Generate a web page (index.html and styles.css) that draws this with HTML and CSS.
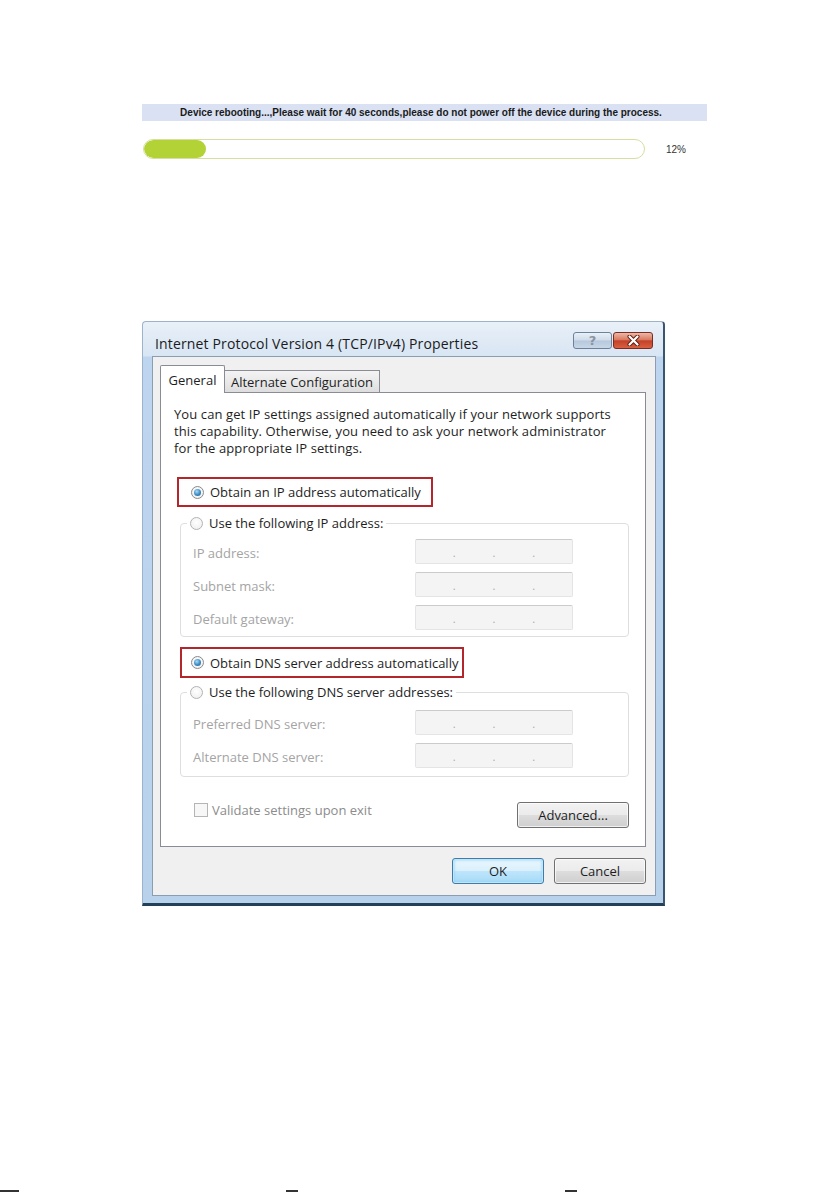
FILE: index.html
```html
<!DOCTYPE html>
<html lang="en">
<head>
<meta charset="utf-8">
<title>Device rebooting</title>
<link rel="stylesheet" href="styles.css">
</head>
<body>
<div class="page">
  <section class="reboot">
    <div class="banner">Device rebooting...,Please wait for 40 seconds,please do not power off the device during the process.</div>
    <div class="progress-row">
      <div class="progress"><div class="progress-fill" style="width:12.4%"></div></div>
      <span class="percent">12%</span>
    </div>
  </section>

  <div class="window">
    <div class="titlebar">
      <span class="title">Internet Protocol Version 4 (TCP/IPv4) Properties</span>
      <div class="caption-buttons">
        <span class="cap-btn help">?</span>
        <span class="cap-btn close">
          <svg width="13" height="11" viewBox="0 0 13 11" aria-hidden="true">
            <path d="M2.5 1.5 L10.5 9.5 M10.5 1.5 L2.5 9.5" stroke="#5a1c12" stroke-width="4" stroke-linecap="round"/>
            <path d="M2.5 1.5 L10.5 9.5 M10.5 1.5 L2.5 9.5" stroke="#ffffff" stroke-width="2.2" stroke-linecap="round"/>
          </svg>
        </span>
      </div>
    </div>

    <div class="client">
      <div class="tabs">
        <span class="tab active">General</span>
        <span class="tab">Alternate Configuration</span>
      </div>
      <div class="panel">
        <p class="intro">You can get IP settings assigned automatically if your network supports<br>this capability. Otherwise, you need to ask your network administrator<br>for the appropriate IP settings.</p>

        <div class="highlight hl-ip">
          <span class="option"><span class="radio on"></span>Obtain an IP address automatically</span>
        </div>

        <fieldset class="group group-ip">
          <legend><span class="radio"></span>Use the following IP address:</legend>
          <div class="field-row"><span class="field-label">IP address:</span><span class="ipbox"><span>.</span><span>.</span><span>.</span></span></div>
          <div class="field-row"><span class="field-label">Subnet mask:</span><span class="ipbox"><span>.</span><span>.</span><span>.</span></span></div>
          <div class="field-row"><span class="field-label">Default gateway:</span><span class="ipbox"><span>.</span><span>.</span><span>.</span></span></div>
        </fieldset>

        <div class="highlight hl-dns">
          <span class="option"><span class="radio on"></span>Obtain DNS server address automatically</span>
        </div>

        <fieldset class="group group-dns">
          <legend><span class="radio"></span>Use the following DNS server addresses:</legend>
          <div class="field-row"><span class="field-label">Preferred DNS server:</span><span class="ipbox"><span>.</span><span>.</span><span>.</span></span></div>
          <div class="field-row"><span class="field-label">Alternate DNS server:</span><span class="ipbox"><span>.</span><span>.</span><span>.</span></span></div>
        </fieldset>

        <div class="panel-footer">
          <span class="check-option"><span class="checkbox"></span>Validate settings upon exit</span>
          <button class="btn advanced" type="button">Advanced...</button>
        </div>
      </div>

      <div class="dialog-buttons">
        <button class="btn default" type="button">OK</button>
        <button class="btn" type="button">Cancel</button>
      </div>
    </div>
  </div>

  <div class="edge-marks"><span class="m1"></span><span class="m2"></span><span class="m3"></span></div>
</div>
</body>
</html>
```

FILE: styles.css
```css
* { box-sizing: border-box; }

html, body {
  margin: 0;
  padding: 0;
  background: #ffffff;
}

body {
  width: 840px;
  height: 1192px;
  overflow: hidden;
  font-family: "Open Sans", "Noto Sans", sans-serif;
  color: #1e1e1e;
}

.page {
  padding-top: 104px;
}

/* ---------- reboot notice ---------- */
.reboot {
  margin-left: 142px;
  width: 565px;
}

.banner {
  height: 17px;
  background: #d9e1f3;
  font-family: "Liberation Sans", Arial, sans-serif;
  font-weight: bold;
  font-size: 10px;
  line-height: 17px;
  color: #1a1a1a;
  text-align: center;
  white-space: nowrap;
  padding-right: 7px;
}

.progress-row {
  display: flex;
  align-items: center;
  margin-top: 18px;
  padding-left: 1px;
}

.progress {
  width: 502px;
  height: 20px;
  border: 1px solid #d5df9f;
  border-radius: 10px;
  background: #ffffff;
  overflow: hidden;
}

.progress-fill {
  height: 100%;
  background: #b3d236;
  border-radius: 9px;
}

.percent {
  margin-left: 21px;
  font-family: "Liberation Sans", Arial, sans-serif;
  font-size: 10px;
  color: #333333;
}

/* ---------- window frame ---------- */
.window {
  margin: 162px 0 0 142px;
  width: 523px;
  height: 585px;
  border-top: 1px solid #9db3c9;
  border-left: 1px solid #9db3c9;
  border-right: 2px solid #3a556f;
  border-bottom: 3px solid #243f58;
  border-radius: 4px 4px 0 0;
  background: linear-gradient(to bottom, #e9f0f8 0px, #d8e5f3 34px, #bdd5ee 35px, #b9d2ec 100%);
  display: flex;
  flex-direction: column;
}

.titlebar {
  display: flex;
  align-items: flex-start;
  height: 34px;
  padding-left: 12px;
  flex: none;
}

.title {
  margin-top: 13px;
  font-size: 14px;
  letter-spacing: 0.15px;
  line-height: 17px;
  color: #1b1b1b;
  white-space: nowrap;
}

.caption-buttons {
  display: flex;
  gap: 1px;
  margin-left: auto;
  margin-right: 10px;
  margin-top: 10px;
}

.cap-btn {
  display: flex;
  align-items: center;
  justify-content: center;
  height: 17px;
  border-radius: 3px;
}

.help {
  width: 39px;
  border: 1px solid #6d8199;
  background: linear-gradient(to bottom, #e9f0f8 0%, #cfdcea 48%, #b6c8dc 52%, #c7d7e8 100%);
  font-family: "DejaVu Sans", sans-serif;
  font-size: 13px;
  font-weight: bold;
  color: #8a94a1;
  line-height: 1;
}

.close {
  width: 40px;
  border: 1px solid #7b2c20;
  background: linear-gradient(to bottom, #ecb8a8 0%, #d9785e 46%, #c4412a 52%, #d8603f 100%);
}

/* ---------- client area ---------- */
.client {
  flex: 1;
  margin: 0 7px 7px 9px;
  border: 1px solid #8b9db1;
  background: #f0f0f0;
  padding: 8px 9px 0 7px;
  display: flex;
  flex-direction: column;
}

.tabs {
  display: flex;
  align-items: flex-end;
  height: 28px;
  margin-bottom: -1px;
  font-size: 13px;
}

.tab {
  display: flex;
  align-items: center;
  justify-content: center;
  height: 23px;
  width: 155px;
  border: 1px solid #898c95;
  border-bottom: none;
  border-left: none;
  background: linear-gradient(to bottom, #f3f3f3 0%, #e9e9e9 50%, #dcdcdc 100%);
  color: #1e1e1e;
  white-space: nowrap;
}

.tab.active {
  position: relative;
  z-index: 1;
  height: 28px;
  width: 65px;
  border-left: 1px solid #898c95;
  border-radius: 2px 2px 0 0;
  background: #ffffff;
}

.panel {
  border: 1px solid #898c95;
  background: #ffffff;
  padding-bottom: 18px;
  font-size: 13px;
}

.intro {
  margin: 13px 0 0 13px;
  line-height: 17px;
  letter-spacing: 0.1px;
  white-space: nowrap;
}

.highlight {
  display: flex;
  align-items: center;
  border: 2px solid #b3262b;
}

.hl-ip {
  margin: 20px 0 0 16px;
  width: 256px;
  height: 30px;
  padding-left: 12px;
}

.hl-dns {
  margin: 10px 0 0 19px;
  width: 284px;
  height: 31px;
  padding-left: 9px;
}

.option {
  display: flex;
  align-items: center;
  gap: 6px;
  white-space: nowrap;
}

.radio {
  display: inline-flex;
  align-items: center;
  justify-content: center;
  width: 13px;
  height: 13px;
  border-radius: 50%;
  border: 1px solid #b3b3b3;
  background: radial-gradient(circle at 50% 40%, #ffffff 0%, #ececec 100%);
  flex: none;
}

.radio.on {
  border-color: #8a8a8a;
}

.radio.on::after {
  content: "";
  width: 7px;
  height: 7px;
  border-radius: 50%;
  background: radial-gradient(circle at 40% 35%, #a8dcf8 0%, #3a8ac4 55%, #1d5a8c 100%);
}

.group {
  margin: 0 16px 0 19px;
  border: 1px solid #dcdfe2;
  border-radius: 4px;
  padding: 4px 8px 2px 6px;
  min-width: 0;
}

.group-ip {
  margin-top: 8px;
}

.group-dns {
  margin-top: 6px;
  padding-top: 6px;
  padding-bottom: 4px;
}

.group legend {
  display: flex;
  align-items: center;
  gap: 6px;
  height: 16px;
  padding: 0 3px 0 3px;
  color: #1e1e1e;
  white-space: nowrap;
}

.field-row {
  display: flex;
  align-items: center;
  height: 33px;
  padding-left: 6px;
}

.field-label {
  width: 222px;
  color: #a4a4a4;
  padding-top: 3px;
}

.ipbox {
  display: flex;
  justify-content: space-evenly;
  align-items: center;
  width: 158px;
  height: 25px;
  border: 1px solid #e3e4e6;
  border-top-color: #c9cbce;
  border-radius: 2px;
  background: #f4f4f4;
  color: #a8a8a8;
  font-size: 11px;
  line-height: 1;
  padding-top: 2px;
}

.panel-footer {
  display: flex;
  align-items: flex-start;
  justify-content: space-between;
  margin: 25px 16px 0 33px;
}

.check-option {
  display: flex;
  align-items: center;
  gap: 4px;
  height: 16px;
  color: #8c8c8c;
  white-space: nowrap;
}

.checkbox {
  width: 14px;
  height: 14px;
  border: 1px solid #b5b5b5;
  background: #f7f7f7;
  flex: none;
}

.btn {
  height: 26px;
  border: 1px solid #707070;
  border-radius: 3px;
  background: linear-gradient(to bottom, #f2f2f2 0%, #ebebeb 49%, #dddddd 51%, #cfcfcf 100%);
  box-shadow: inset 0 0 0 1px rgba(255, 255, 255, 0.7);
  font-family: "Open Sans", "Noto Sans", sans-serif;
  font-size: 13px;
  color: #1e1e1e;
  padding: 0;
}

.advanced {
  width: 112px;
}

.dialog-buttons {
  display: flex;
  justify-content: flex-end;
  gap: 10px;
  margin-top: 11px;
}

.dialog-buttons .btn {
  width: 92px;
}

.btn.default {
  border-color: #3c7db0;
  background: linear-gradient(to bottom, #eaf6fd 0%, #d9f0fc 49%, #bee6fd 51%, #a7d9f5 100%);
  box-shadow: inset 0 0 0 1px #c4e5f6, inset 0 0 3px 1px #8fd0f3;
}

/* ---------- page edge marks ---------- */
.edge-marks {
  display: flex;
  height: 2px;
  margin-top: 284px;
}

.edge-marks span {
  height: 2px;
  background: #333333;
}

.edge-marks .m1 { width: 19px; }
.edge-marks .m2 { width: 12px; margin-left: 267px; }
.edge-marks .m3 { width: 12px; margin-left: 267px; }
```
